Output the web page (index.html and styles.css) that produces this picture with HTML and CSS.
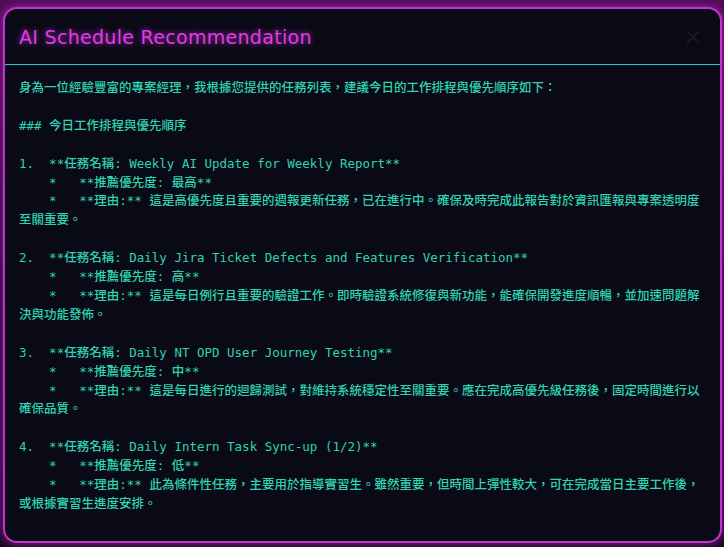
FILE: index.html
```html
<!DOCTYPE html>
<html lang="zh-Hant">
<head>
<meta charset="utf-8">
<title>AI Schedule Recommendation</title>
<link rel="stylesheet" href="styles.css">
</head>
<body>
<div class="modal">
  <div class="modal-header">
    <h2 class="modal-title">AI Schedule Recommendation</h2>
    <button class="close" aria-label="close">
      <svg width="14" height="14" viewBox="0 0 14 14"><path d="M1 1L13 13M13 1L1 13" stroke="#1d1d2a" stroke-width="1.6" fill="none"/></svg>
    </button>
  </div>
  <div class="modal-body">
<pre class="md">身為一位經驗豐富的專案經理，我根據您提供的任務列表，建議今日的工作排程與優先順序如下：

<span class="l">###</span> 今日工作排程與優先順序

<span class="l">1.  **</span>任務名稱<span class="l">: Weekly AI Update for Weekly Report**</span>
<span class="l">    *   **</span>推薦優先度<span class="l">: </span>最高<span class="l">**</span>
<span class="l">    *   **</span>理由<span class="l">:** </span>這是高優先度且重要的週報更新任務，已在進行中。確保及時完成此報告對於資訊匯報與專案透明度至關重要。

<span class="l">2.  **</span>任務名稱<span class="l">: Daily Jira Ticket Defects and Features Verification**</span>
<span class="l">    *   **</span>推薦優先度<span class="l">: </span>高<span class="l">**</span>
<span class="l">    *   **</span>理由<span class="l">:** </span>這是每日例行且重要的驗證工作。即時驗證系統修復與新功能，能確保開發進度順暢，並加速問題解決與功能發佈。

<span class="l">3.  **</span>任務名稱<span class="l">: Daily NT OPD User Journey Testing**</span>
<span class="l">    *   **</span>推薦優先度<span class="l">: </span>中<span class="l">**</span>
<span class="l">    *   **</span>理由<span class="l">:** </span>這是每日進行的迴歸測試，對維持系統穩定性至關重要。應在完成高優先級任務後，固定時間進行以確保品質。

<span class="l">4.  **</span>任務名稱<span class="l">: Daily Intern Task Sync-up (1/2)**</span>
<span class="l">    *   **</span>推薦優先度<span class="l">: </span>低<span class="l">**</span>
<span class="l">    *   **</span>理由<span class="l">:** </span>此為條件性任務，主要用於指導實習生。雖然重要，但時間上彈性較大，可在完成當日主要工作後，或根據實習生進度安排。</pre>
  </div>
</div>
</body>
</html>
```
FILE: styles.css
```css
html, body {
  margin: 0;
  height: 100%;
}
body {
  background: linear-gradient(180deg, #4e0c55 0%, #2c0834 40%, #1c0626 100%);
  padding: 7px 2px 4px 3px;
  box-sizing: border-box;
  overflow: hidden;
}
.modal {
  box-sizing: border-box;
  height: 536px;
  width: 719px;
  background: #0a0a17;
  border: 2px solid #c62fd2;
  border-radius: 14px;
  box-shadow: 0 0 10px rgba(217, 70, 239, 0.55);
  display: flex;
  flex-direction: column;
  overflow: hidden;
}
.modal-header {
  height: 55px;
  border-bottom: 1px solid #22c8d8;
  display: flex;
  align-items: center;
  justify-content: space-between;
  padding: 0 14px 0 14px;
  flex-shrink: 0;
}
.modal-title {
  margin: 0;
  font-family: "DejaVu Sans", sans-serif;
  font-weight: normal;
  font-size: 19px;
  letter-spacing: 0.3px;
  color: #e23be6;
  text-shadow: 0 0 6px rgba(230, 60, 240, 0.7);
}
.close {
  background: none;
  border: 0;
  padding: 0;
  margin-right: 3px;
  width: 20px;
  height: 20px;
  display: flex;
  align-items: center;
  justify-content: center;
}
.modal-body {
  padding: 14px 14px 0 14px;
}
.md {
  margin: 0;
  white-space: pre-wrap;
  word-break: break-all;
  font-family: "DejaVu Sans Mono", "Noto Sans CJK TC", monospace;
  font-size: 12.5px;
  font-weight: 500;
  line-height: 18.9px;
  color: #2fd3b1;
}
.l {
  font-weight: normal;
}
```
